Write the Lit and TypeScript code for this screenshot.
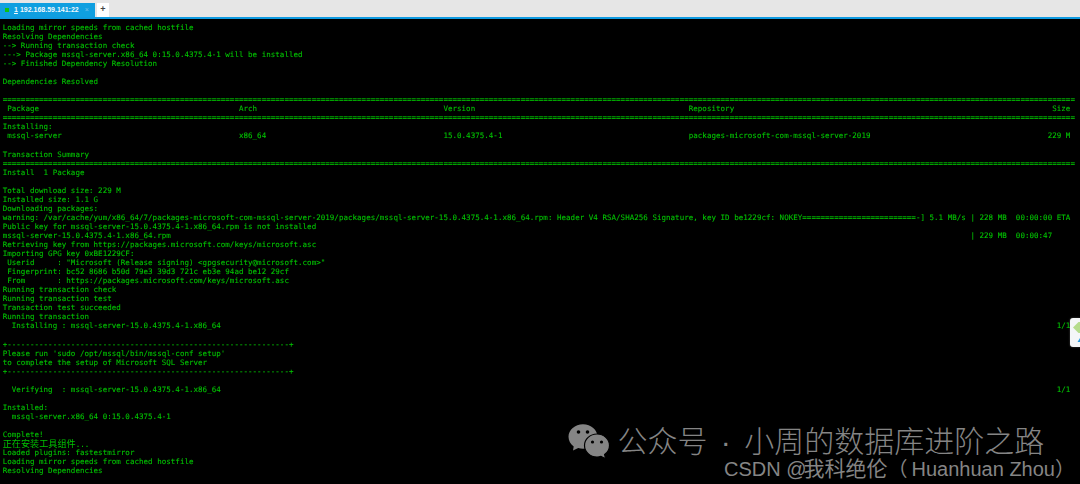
import { LitElement, html, css } from "lit";
import { customElement } from "lit/decorators.js";

const eq = "=".repeat(236);
const dash = "+" + "-".repeat(62) + "+";
const row = (a: string, b: string, c: string, d: string, e: string) =>
  a.padEnd(52) + b.padEnd(45) + c.padEnd(54) + d.padEnd(235 - 151 - e.length) + e;

const before = [
  "Loading mirror speeds from cached hostfile",
  "Resolving Dependencies",
  "--> Running transaction check",
  "---> Package mssql-server.x86_64 0:15.0.4375.4-1 will be installed",
  "--> Finished Dependency Resolution",
  "",
  "Dependencies Resolved",
  "",
  eq,
  row(" Package", "Arch", "Version", "Repository", "Size"),
  eq,
  "Installing:",
  row(" mssql-server", "x86_64", "15.0.4375.4-1", "packages-microsoft-com-mssql-server-2019", "229 M"),
  "",
  "Transaction Summary",
  eq,
  "Install  1 Package",
  "",
  "Total download size: 229 M",
  "Installed size: 1.1 G",
  "Downloading packages:",
  "warning: /var/cache/yum/x86_64/7/packages-microsoft-com-mssql-server-2019/packages/mssql-server-15.0.4375.4-1.x86_64.rpm: Header V4 RSA/SHA256 Signature, key ID be1229cf: NOKEY=========================-] 5.1 MB/s | 228 MB  00:00:00 ETA",
  "Public key for mssql-server-15.0.4375.4-1.x86_64.rpm is not installed",
  "mssql-server-15.0.4375.4-1.x86_64.rpm".padEnd(213) + "| 229 MB  00:00:47",
  "Retrieving key from https://packages.microsoft.com/keys/microsoft.asc",
  "Importing GPG key 0xBE1229CF:",
  ' Userid     : "Microsoft (Release signing) <gpgsecurity@microsoft.com>"',
  " Fingerprint: bc52 8686 b50d 79e3 39d3 721c eb3e 94ad be12 29cf",
  " From       : https://packages.microsoft.com/keys/microsoft.asc",
  "Running transaction check",
  "Running transaction test",
  "Transaction test succeeded",
  "Running transaction",
  "  Installing : mssql-server-15.0.4375.4-1.x86_64".padEnd(232) + "1/1",
  "",
  dash,
  "Please run 'sudo /opt/mssql/bin/mssql-conf setup'",
  "to complete the setup of Microsoft SQL Server",
  dash,
  "",
  "  Verifying  : mssql-server-15.0.4375.4-1.x86_64".padEnd(232) + "1/1",
  "",
  "Installed:",
  "  mssql-server.x86_64 0:15.0.4375.4-1",
  "",
  "Complete!",
];
const after = [
  "Loaded plugins: fastestmirror",
  "Loading mirror speeds from cached hostfile",
  "Resolving Dependencies",
];

@customElement("app-root")
export class AppRoot extends LitElement {
  static styles = css`
    :host {
      display: block;
      width: 1080px;
      height: 484px;
      position: relative;
      overflow: hidden;
      background: #000;
    }
    .tabbar {
      height: 17px;
      background: #e6e6e6;
      display: flex;
      align-items: flex-end;
    }
    .tab {
      width: 95px;
      height: 14px;
      background: #0f9fe0;
      display: flex;
      align-items: center;
      font: 700 7px/14px "Liberation Sans", sans-serif;
      color: #f2f8fc;
      box-sizing: border-box;
      padding-left: 5px;
    }
    .dot {
      width: 4px;
      height: 4px;
      background: #0fc00f;
      margin-right: 5px;
    }
    .num {
      text-decoration: underline;
      margin-right: 2px;
    }
    .close {
      margin-left: 6px;
      color: #7cc0e8;
      font-weight: 400;
      font-size: 7px;
    }
    .plus {
      width: 12px;
      height: 14px;
      background: #fff;
      margin-left: 2px;
      color: #444;
      font: 700 9px/13px "Liberation Sans", sans-serif;
      text-align: center;
    }
    .rule {
      height: 2px;
      background: #0f9ae0;
    }
    .term {
      margin: 0;
      padding: 3.9px 0 0 2.7px;
      font: 7.5px/9.06px "DejaVu Sans Mono", "Noto Sans CJK SC", monospace;
      letter-spacing: 0.028px;
      color: #00c400;
      -webkit-text-stroke: 0.1px #00c400;
      white-space: pre;
      filter: blur(0.25px);
    }
    .line {
      display: block;
      height: 9.06px;
    }
    .cjk {
      font-family: "Noto Sans CJK SC", sans-serif;
      font-size: 9.1px;
      line-height: 9.06px;
      -webkit-text-stroke: 0;
    }
    .side {
      position: absolute;
      left: 1070px;
      top: 318px;
      width: 10px;
      height: 29px;
      background: #f4f6f8;
      border-radius: 3px 0 0 3px;
      box-shadow: 0 0 2px rgba(255, 255, 255, 0.3);
    }
    .side svg {
      display: block;
    }
    .mark {
      position: absolute;
      left: 567.5px;
      top: 424px;
      display: flex;
      align-items: center;
      color: #858585;
    }
    .mark svg {
      display: block;
      margin-right: 8px;
    }
    .mark-text {
      font: 300 30px/34px "Liberation Sans", "Noto Sans CJK SC", sans-serif;
      word-spacing: 5px;
      white-space: nowrap;
    }
    .csdn {
      position: absolute;
      left: 724px;
      top: 458px;
      color: #858585;
      font: 20px/22px "Liberation Sans", "Noto Sans CJK SC", sans-serif;
      white-space: nowrap;
    }
    .csdn-cn {
      font-size: 21px;
      margin-left: -3px;
    }
    .csdn-paren {
      margin-right: 4px;
    }
  `;

  render() {
    const row = (l: string) => html`<span class="line">${l}</span>`;
    return html`
      <div class="tabbar">
        <div class="tab">
          <span class="dot"></span><span class="num">1</span>
          <span>192.168.59.141:22</span><span class="close">×</span>
        </div>
        <div class="plus">+</div>
      </div>
      <div class="rule"></div>
      <pre class="term">${before.map(row)}<span class="line"><span class="cjk">正在安装工具组件</span>...</span>${after.map(row)}</pre>
      <div class="side">
        <svg width="10" height="29" viewBox="0 0 10 29">
          <path d="M3 9.500 L8.500 4 L10 4 L10 15 L8.500 15 Z" fill="#b5dc8c" />
          <path d="M7.500 24 L10 20 L10 24 Z" fill="#2a9be0" />
        </svg>
      </div>
      <div class="mark">
        <svg width="42" height="35" viewBox="0 0 42 35">
          <path d="M15 0.200C7 0.200 0.500 5.800 0.500 12.800c0 3.900 2 7.300 5.200 9.600L5 26.500l5.200-2.400c1.500.4 3.100.7 4.800.7 8 0 14.500-5.600 14.500-12C29.500 5.800 23 .2 15 .2z" fill="#858585" />
          <path d="M41.500 21.500c0-6.300-5.600-11.500-12.500-11.500s-12.500 5.200-12.500 11.500S22.100 33 29 33c1.400 0 2.700-.2 4-.6l4.600 2.400-1-4.200c3-2.100 4.900-5.500 4.900-9.100z" fill="#858585" stroke="#000" stroke-width="1.200" />
          <circle cx="10.500" cy="8" r="1.800" fill="#000" />
          <circle cx="19.500" cy="8" r="1.800" fill="#000" />
          <circle cx="24.500" cy="18" r="1.600" fill="#000" />
          <circle cx="33.500" cy="18" r="1.600" fill="#000" />
        </svg>
        <span class="mark-text">公众号 · 小周的数据库进阶之路</span>
      </div>
      <div class="csdn">CSDN @<span class="csdn-cn">我科绝伦</span><span class="csdn-paren">（</span>Huanhuan Zhou）</div>
    `;
  }
}
